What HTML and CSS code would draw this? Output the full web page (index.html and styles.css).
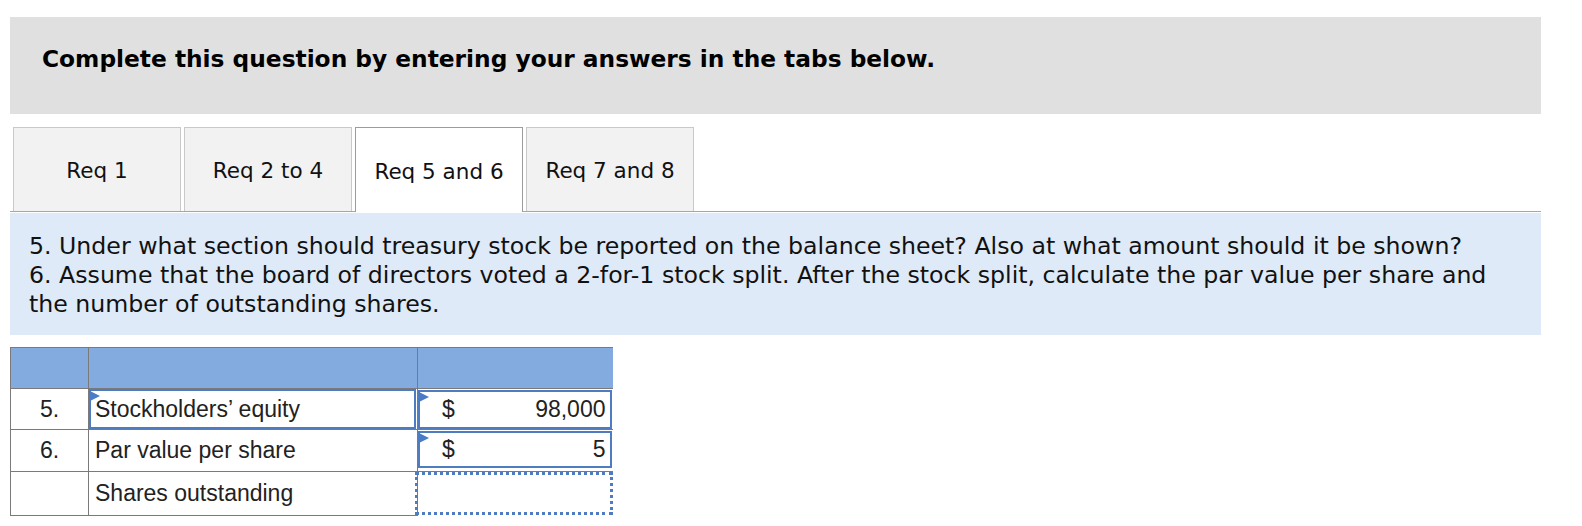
FILE: index.html
```html
<!DOCTYPE html>
<html>
<head>
<meta charset="utf-8">
<link rel="stylesheet" href="styles.css">
</head>
<body>
<div class="page">
  <div class="banner">Complete this question by entering your answers in the tabs below.</div>
  <div class="tabs">
    <div class="tab">Req 1</div>
    <div class="tab">Req 2 to 4</div>
    <div class="tab active">Req 5 and 6</div>
    <div class="tab">Req 7 and 8</div>
  </div>
  <div class="question">
    <p>5. Under what section should treasury stock be reported on the balance sheet? Also at what amount should it be shown?</p>
    <p>6. Assume that the board of directors voted a 2-for-1 stock split. After the stock split, calculate the par value per share and the number of outstanding shares.</p>
  </div>
  <table class="grid">
    <colgroup><col class="c1"><col class="c2"><col class="c3"></colgroup>
    <tr class="head"><th></th><th></th><th class="last"></th></tr>
    <tr class="r1">
      <td class="num">5.</td>
      <td class="lbl"><div class="field text"><span class="flag"></span>Stockholders’ equity</div></td>
      <td class="amt"><div class="field money"><span class="flag"></span><span class="cur">$</span><span class="val">98,000</span></div></td>
    </tr>
    <tr class="r2">
      <td class="num">6.</td>
      <td class="lbl plain">Par value per share</td>
      <td class="amt"><div class="field money"><span class="flag"></span><span class="cur">$</span><span class="val">5</span></div></td>
    </tr>
    <tr class="r3">
      <td class="num"></td>
      <td class="lbl plain">Shares outstanding</td>
      <td class="amt"><div class="field dotted"></div></td>
    </tr>
  </table>
</div>
</body>
</html>
```
FILE: styles.css
```css
html, body { margin: 0; padding: 0; background: #fff; }
.page { padding: 17px 41px 0 10px; }

.banner {
  background: #e0e0e0;
  height: 97px;
  box-sizing: border-box;
  padding: 28px 0 0 32px;
  font-family: "DejaVu Sans", Verdana, sans-serif;
  font-weight: bold;
  font-size: 23.3px;
  line-height: 27px;
  color: #000;
}

.tabs {
  display: flex;
  gap: 3px;
  padding-left: 3px;
  margin-top: 13px;
  border-bottom: 1px solid #a6a6a6;
}
.tab {
  width: 168px;
  height: 84px;
  box-sizing: border-box;
  border: 1px solid #c9c9c9;
  border-bottom: none;
  background: #f2f2f2;
  display: flex;
  align-items: center;
  justify-content: center;
  font-family: "DejaVu Sans", Verdana, sans-serif;
  font-size: 21.5px;
  color: #111;
  padding-top: 2px;
}
.tab.active {
  background: #fff;
  border-color: #9c9c9c;
  height: 85px;
  margin-bottom: -1px;
  position: relative;
}

.question {
  margin-top: 1px;
  background: #deeaf7;
  height: 122px;
  box-sizing: border-box;
  padding: 19px 20px 0 19px;
  font-family: "DejaVu Sans", Verdana, sans-serif;
  font-size: 23.65px;
  line-height: 29px;
  color: #111;
}
.question p { margin: 0; }

.grid {
  margin-top: 12px;
  border-collapse: collapse;
  font-family: "Liberation Sans", Arial, sans-serif;
  font-size: 23px;
  color: #222;
}
.grid .c1 { width: 78px; }
.grid .c2 { width: 329px; }
.grid .c3 { width: 195px; }
.grid td, .grid th { padding: 0; border: 1px solid #7a7a7a; }
.grid .head th { background: #84abdf; height: 40px; border-bottom-color: #7a7a7a; }
.grid .head th.last { border-right: none; }
.grid tr.r1 td { height: 40px; }
.grid tr.r2 td { height: 41px; }
.grid tr.r3 td { height: 40px; }
.grid td.amt { border-right: none; border-bottom: none; }
.grid td.num { text-align: center; }
.grid td.lbl.plain { padding-left: 6px; }
.grid td.lbl { vertical-align: middle; }

.field { position: relative; box-sizing: border-box; }
.field.text {
  border: 2px solid #4f7cc1;
  height: 40px;
  margin: 0 1px 0 0;
  padding-left: 4px;
  display: flex;
  align-items: center;
}
.field.money {
  border: 2px solid #4f7cc1;
  height: 39px;
  margin: 0 1px 0 0;
  display: flex;
  align-items: center;
  padding: 0 4px 0 22px;
}
.r2 .field.money { height: 37px; margin-bottom: 3px; }
.field .cur { flex: none; }
.field .val { flex: 1; text-align: right; }
.field.dotted {
  border: 3px dotted #4f7cc1;
  height: 43px;
  margin-left: -3px;
}
.flag {
  position: absolute;
  left: -1px;
  top: 0px;
  width: 0; height: 0;
  border-top: 5px solid transparent;
  border-bottom: 5px solid transparent;
  border-left: 10px solid #4a7bc6;
}
```
